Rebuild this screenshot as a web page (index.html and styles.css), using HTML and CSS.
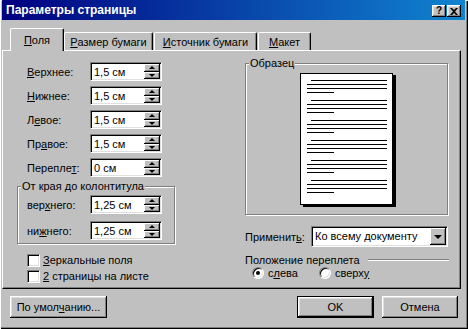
FILE: index.html
```html
<!DOCTYPE html>
<html lang="ru">
<head>
    <meta charset="UTF-8">
    <title>Параметры страницы</title>
    <link rel="stylesheet" href="styles.css">
</head>
<body>
    <div class="dialog">
        <div class="titlebar">
            <span class="title">Параметры страницы</span>
            <span class="cap-btn">?</span>
            <span class="cap-btn close">
                <svg width="8" height="7" viewBox="0 0 8 7"><path d="M0 0h2l2 2 2-2h2L5 3.5 8 7H6L4 5 2 7H0l3-3.5z" fill="#000"/></svg>
            </span>
        </div>

        <div class="tabs">
            <div class="tab active"><u>П</u>оля</div>
            <div class="tab size"><u>Р</u>азмер бумаги</div>
            <div class="tab source"><u>И</u>сточник бумаги</div>
            <div class="tab layout"><u>М</u>акет</div>
        </div>

        <div class="panel">
            <div class="left-col">
                <div class="field"><label><u>В</u>ерхнее:</label><div class="input"><span class="value">1,5 см</span><div class="spin"><i class="up"></i><i class="down"></i></div></div></div>
                <div class="field"><label><u>Н</u>ижнее:</label><div class="input"><span class="value">1,5 см</span><div class="spin"><i class="up"></i><i class="down"></i></div></div></div>
                <div class="field"><label>Л<u>е</u>вое:</label><div class="input"><span class="value">1,5 см</span><div class="spin"><i class="up"></i><i class="down"></i></div></div></div>
                <div class="field"><label>Пр<u>а</u>вое:</label><div class="input"><span class="value">1,5 см</span><div class="spin"><i class="up"></i><i class="down"></i></div></div></div>
                <div class="field"><label>Перепле<u>т</u>:</label><div class="input"><span class="value">0 см</span><div class="spin"><i class="up"></i><i class="down"></i></div></div></div>

                <div class="group">
                    <span class="legend">От края до колонтитула</span>
                    <div class="field"><label>вер<u>х</u>него:</label><div class="input"><span class="value">1,25 см</span><div class="spin"><i class="up"></i><i class="down"></i></div></div></div>
                    <div class="field"><label>ни<u>ж</u>него:</label><div class="input"><span class="value">1,25 см</span><div class="spin"><i class="up"></i><i class="down"></i></div></div></div>
                </div>

                <div class="check first"><span class="box"></span><span><u>З</u>еркальные поля</span></div>
                <div class="check"><span class="box"></span><span><u>2</u> страницы на листе</span></div>
            </div>

            <div class="right-col">
                <div class="frame sample">
                    <span class="legend">Образец</span>
                    <svg class="page-preview" width="96" height="134" viewBox="0 0 96 134">
                        <rect x="3" y="2" width="93" height="132" fill="#000"/>
                        <rect x="0.5" y="0.5" width="92" height="131" fill="#fff" stroke="#000"/>
                        <g fill="#000">
                            <rect x="11" y="7" width="76" height="1"/><rect x="7" y="11" width="80" height="1"/><rect x="7" y="15" width="80" height="1"/><rect x="7" y="19" width="27" height="1"/>
                            <rect x="11" y="27" width="76" height="1"/><rect x="7" y="31" width="80" height="1"/><rect x="7" y="35" width="80" height="1"/><rect x="7" y="39" width="27" height="1"/>
                            <rect x="11" y="47" width="76" height="1"/><rect x="7" y="51" width="80" height="1"/><rect x="7" y="55" width="80" height="1"/><rect x="7" y="59" width="27" height="1"/>
                            <rect x="11" y="67" width="76" height="1"/><rect x="7" y="71" width="80" height="1"/><rect x="7" y="75" width="80" height="1"/><rect x="7" y="79" width="27" height="1"/>
                            <rect x="11" y="87" width="76" height="1"/><rect x="7" y="91" width="80" height="1"/><rect x="7" y="95" width="80" height="1"/><rect x="7" y="99" width="27" height="1"/>
                            <rect x="11" y="107" width="76" height="1"/><rect x="7" y="111" width="80" height="1"/><rect x="7" y="115" width="80" height="1"/><rect x="7" y="119" width="27" height="1"/>
                        </g>
                    </svg>
                </div>

                <div class="apply">
                    <label>Применит<u>ь</u>:</label>
                    <div class="combo"><span class="value">Ко всему документу</span><span class="drop"><i class="down"></i></span></div>
                </div>

                <div class="heading"><span>Положение переплета</span><span class="rule"></span></div>
                <div class="radios">
                    <div class="option"><span class="radio checked"></span><span>с<u>л</u>ева</span></div>
                    <div class="option"><span class="radio"></span><span>сверх<u>у</u></span></div>
                </div>
            </div>
        </div>

        <div class="buttons">
            <button class="btn default-btn">По умол<u>ч</u>анию...</button>
            <button class="btn ok">OK</button>
            <button class="btn cancel">Отмена</button>
        </div>
    </div>
</body>
</html>
```

FILE: styles.css
```css
* {
    box-sizing: border-box;
}
body {
    margin: 0;
    font-family: "Liberation Sans", Arial, sans-serif;
    font-size: 11px;
    color: #000;
}
u {
    text-decoration: underline;
    text-underline-offset: 1px;
}
.dialog {
    width: 468px;
    height: 329px;
    padding: 0 3px 0 2px;
    background: #c0c0c0;
    box-shadow: inset 1px 1px #fff, inset -1px -1px #000, inset -2px -2px #808080;
}

/* title bar */
.titlebar {
    height: 20px;
    display: flex;
    align-items: flex-start;
    padding: 0 4px 0 4px;
    background: linear-gradient(to right, #000080, #1084d0);
    color: #fff;
    font-weight: bold;
    font-size: 12px;
}
.title {
    flex: 1;
    line-height: 20px;
}
.cap-btn {
    width: 14px;
    height: 12px;
    margin-top: 5px;
    display: flex;
    align-items: center;
    justify-content: center;
    background: #c0c0c0;
    color: #000;
    font-size: 10px;
    line-height: 1;
    box-shadow: inset -1px -1px #000, inset 1px 1px #fff, inset -2px -2px #808080, inset 2px 2px #dfdfdf;
}
.cap-btn.close {
    margin-left: 1px;
}

/* tabs */
.tabs {
    height: 30px;
    padding: 8px 0 0 8px;
    display: flex;
    align-items: flex-end;
}
.tab {
    height: 18px;
    width: 89px;
    display: flex;
    align-items: center;
    justify-content: center;
    border-top: 1px solid #fff;
    border-left: 1px solid #fff;
    border-right: 1px solid #000;
    border-radius: 2px 2px 0 0;
    box-shadow: inset -1px 0 #808080;
    padding-top: 1px;
}
.tab.active {
    width: 54px;
    height: 23px;
    margin-bottom: -1px;
    position: relative;
    z-index: 1;
    background: #c0c0c0;
    padding-bottom: 2px;
}
.tab.source {
    width: 103px;
    margin-left: 1px;
}
.tab.layout {
    width: 53px;
    margin-left: 1px;
}

/* panel */
.panel {
    width: 459px;
    height: 239px;
    display: flex;
    border: 1px solid;
    border-color: #fff #000 #000 #fff;
    box-shadow: inset -1px -1px #808080;
}
.left-col {
    width: 172px;
    padding: 11px 0 0 14px;
}
.field {
    display: flex;
    align-items: center;
    height: 19px;
    margin-bottom: 5px;
    padding-left: 10px;
}
.field label {
    width: 63px;
}
.input, .combo {
    display: flex;
    height: 19px;
    width: 72px;
    padding: 1px;
    background: #fff;
    border: 1px solid;
    border-color: #808080 #fff #fff #808080;
    box-shadow: inset 1px 1px #000, inset -1px -1px #dfdfdf;
}
.value {
    flex: 1;
    padding: 1px 0 0 2px;
    line-height: 14px;
}
.spin {
    width: 16px;
    display: flex;
    flex-direction: column;
}
.spin i, .drop {
    flex: 1;
    display: flex;
    align-items: center;
    justify-content: center;
    background: #c0c0c0;
    box-shadow: inset -1px -1px #000, inset 1px 1px #fff, inset -2px -2px #808080;
}
.spin i::after, .drop i {
    content: "";
    width: 0;
    border-left: 3px solid transparent;
    border-right: 3px solid transparent;
}
.spin .up::after {
    border-bottom: 3px solid #000;
}
.spin .down::after {
    border-top: 3px solid #000;
}

/* etched frames */
.group, .frame {
    border: 1px solid #808080;
    box-shadow: inset 1px 1px #fff, 1px 1px #fff;
}
.legend {
    display: block;
    width: max-content;
    margin: -7px 0 0 3px;
    padding: 0 1px;
    line-height: 13px;
    background: #c0c0c0;
}
.group {
    width: 158px;
    height: 58px;
    margin-top: 9px;
}
.group .legend {
    margin-bottom: 2px;
}
.group .field {
    padding-left: 9px;
    margin-bottom: 7px;
}

.check {
    display: flex;
    align-items: center;
    height: 14px;
    padding-left: 10px;
}
.check.first {
    margin-top: 9px;
    margin-bottom: 2px;
}
.box {
    width: 13px;
    height: 13px;
    margin-right: 3px;
    background: #fff;
    border: 1px solid;
    border-color: #808080 #fff #fff #808080;
    box-shadow: inset 1px 1px #000, inset -1px -1px #dfdfdf;
}

/* right column */
.right-col {
    margin-left: 70px;
    padding-top: 12px;
}
.sample {
    width: 203px;
    height: 152px;
}
.page-preview {
    display: block;
    margin: 3px 0 0 54px;
}
.apply {
    display: flex;
    align-items: center;
    height: 21px;
    margin-top: 11px;
}
.apply label {
    width: 66px;
}
.combo {
    width: 137px;
    height: 21px;
}
.combo .value {
    line-height: 15px;
}
.drop {
    flex: none;
    width: 16px;
}
.drop i {
    border-left-width: 4px;
    border-right-width: 4px;
    border-top: 4px solid #000;
}
.heading {
    display: flex;
    align-items: center;
    width: 204px;
    height: 13px;
    margin-top: 6px;
}
.rule {
    flex: 1;
    height: 2px;
    margin-left: 8px;
    border-top: 1px solid #808080;
    border-bottom: 1px solid #fff;
}
.radios {
    display: flex;
    height: 13px;
    padding-left: 7px;
}
.option {
    display: flex;
    align-items: center;
}
.option:first-child {
    width: 67px;
}
.radio {
    width: 12px;
    height: 12px;
    margin-right: 4px;
    border-radius: 50%;
    background: #fff;
    border: 1px solid;
    border-color: #808080 #fff #fff #808080;
    box-shadow: inset 1px 1px #000, inset -1px -1px #dfdfdf;
    display: flex;
    align-items: center;
    justify-content: center;
}
.radio.checked::after {
    content: "";
    width: 4px;
    height: 4px;
    border-radius: 50%;
    background: #000;
}

/* buttons */
.buttons {
    display: flex;
    margin-top: 7px;
    padding: 0 7px 0 8px;
}
.btn {
    height: 22px;
    width: 76px;
    padding: 0;
    border: none;
    background: #c0c0c0;
    font: inherit;
    color: #000;
    box-shadow: inset -1px -1px #000, inset 1px 1px #fff, inset -2px -2px #808080, inset 2px 2px #dfdfdf;
}
.btn.default-btn {
    width: 97px;
    margin-right: auto;
}
.btn.ok {
    width: 77px;
    border: 1px solid #000;
}
.btn.cancel {
    margin-left: 8px;
}
```
